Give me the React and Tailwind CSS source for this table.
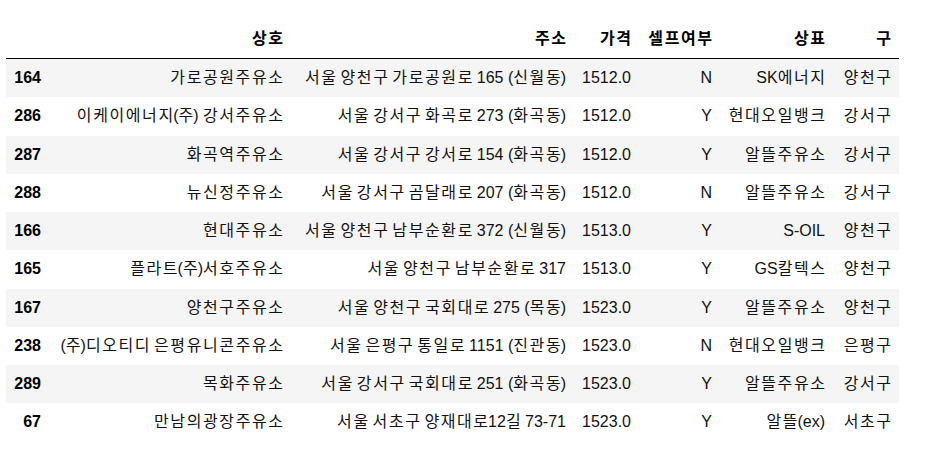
import React from "react";

const rows = [
  ["164", "가로공원주유소", "서울 양천구 가로공원로 165 (신월동)", "1512.0", "N", "SK에너지", "양천구"],
  ["286", "이케이에너지(주) 강서주유소", "서울 강서구 화곡로 273 (화곡동)", "1512.0", "Y", "현대오일뱅크", "강서구"],
  ["287", "화곡역주유소", "서울 강서구 강서로 154 (화곡동)", "1512.0", "Y", "알뜰주유소", "강서구"],
  ["288", "뉴신정주유소", "서울 강서구 곰달래로 207 (화곡동)", "1512.0", "N", "알뜰주유소", "강서구"],
  ["166", "현대주유소", "서울 양천구 남부순환로 372 (신월동)", "1513.0", "Y", "S-OIL", "양천구"],
  ["165", "플라트(주)서호주유소", "서울 양천구 남부순환로 317", "1513.0", "Y", "GS칼텍스", "양천구"],
  ["167", "양천구주유소", "서울 양천구 국회대로 275 (목동)", "1523.0", "Y", "알뜰주유소", "양천구"],
  ["238", "(주)디오티디 은평유니콘주유소", "서울 은평구 통일로 1151 (진관동)", "1523.0", "N", "현대오일뱅크", "은평구"],
  ["289", "목화주유소", "서울 강서구 국회대로 251 (화곡동)", "1523.0", "Y", "알뜰주유소", "강서구"],
  ["67", "만남의광장주유소", "서울 서초구 양재대로12길 73-71", "1523.0", "Y", "알뜰(ex)", "서초구"],
];

const headers = ["", "상호", "주소", "가격", "셀프여부", "상표", "구"];

function K({ text }) {
  const parts = text.split(/([가-힣]+)/);
  return (
    <>
      {parts.map((p, i) =>
        /[가-힣]/.test(p) ? (
          <span key={i} className="tracking-[1.6px] mr-[-1.6px]">
            {p}
          </span>
        ) : (
          <React.Fragment key={i}>{p}</React.Fragment>
        )
      )}
    </>
  );
}

export default function App() {
  return (
    <div
      className="w-[936px] h-[457px] bg-white pt-[20px] pl-[6px] text-black"
      style={{ fontFamily: '"Liberation Sans", "Noto Sans CJK KR", sans-serif' }}
    >
      <table className="table-fixed border-separate border-spacing-0 w-[893px] text-[16px]">
        <colgroup>
          <col className="w-[43px]" />
          <col className="w-[242px]" />
          <col className="w-[283px]" />
          <col className="w-[65px]" />
          <col className="w-[81px]" />
          <col className="w-[113px]" />
          <col className="w-[66px]" />
        </colgroup>
        <thead>
          <tr>
            {headers.map((h, i) => (
              <th
                key={i}
                className="h-[39px] p-0 pr-[8px] text-right align-middle font-bold leading-[20px] border-b border-black whitespace-nowrap"
              >
                <K text={h} />
              </th>
            ))}
          </tr>
        </thead>
        <tbody>
          {rows.map((r, ri) => (
            <tr key={ri} className={ri % 2 === 0 ? "bg-[#f5f5f5]" : "bg-white"}>
              {r.map((c, ci) =>
                ci === 0 ? (
                  <th
                    key={ci}
                    className="h-[38.25px] p-0 pr-[8px] text-right align-middle font-bold leading-[20px] whitespace-nowrap"
                  >
                    {c}
                  </th>
                ) : (
                  <td
                    key={ci}
                    className="h-[38.25px] p-0 pr-[8px] text-right align-middle font-normal leading-[20px] whitespace-nowrap text-[#111]"
                  >
                    <K text={c} />
                  </td>
                )
              )}
            </tr>
          ))}
        </tbody>
      </table>
    </div>
  );
}
